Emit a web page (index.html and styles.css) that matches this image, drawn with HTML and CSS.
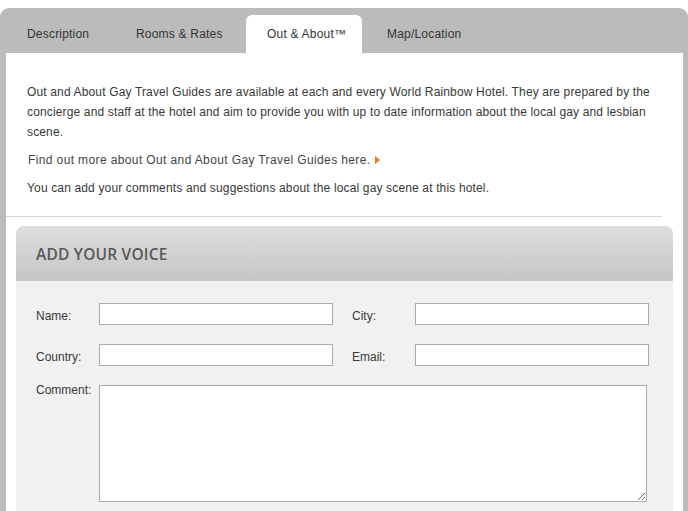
FILE: index.html
```html
<!DOCTYPE html>
<html>
<head>
<meta charset="utf-8">
<link rel="stylesheet" href="styles.css">
</head>
<body>
<div class="panel">
  <nav class="tabs">
    <a class="tab tab-desc">Description</a>
    <a class="tab tab-rooms">Rooms &amp; Rates</a>
    <a class="tab tab-out active">Out &amp; About™</a>
    <a class="tab tab-map">Map/Location</a>
  </nav>
  <div class="content">
    <p class="intro">Out and About Gay Travel Guides are available at each and every World Rainbow Hotel. They are prepared by the concierge and staff at the hotel and aim to provide you with up to date information about the local gay and lesbian scene.</p>
    <p class="more">Find out more about Out and About Gay Travel Guides here. <span class="arrow"></span></p>
    <p class="note">You can add your comments and suggestions about the local gay scene at this hotel.</p>
    <hr class="rule">
    <section class="voice">
      <h2 class="voice-title">ADD YOUR VOICE</h2>
      <form class="voice-form">
        <label class="lbl">Name:</label>
        <input class="field" type="text">
        <label class="lbl">City:</label>
        <input class="field" type="text">
        <label class="lbl">Country:</label>
        <input class="field" type="text">
        <label class="lbl">Email:</label>
        <input class="field" type="text">
        <label class="lbl lbl-top">Comment:</label>
        <textarea class="comment"></textarea>
      </form>
    </section>
  </div>
</div>
</body>
</html>
```

FILE: styles.css
```css
html, body {
  margin: 0;
  padding: 0;
  background: #fff;
}
body {
  padding-top: 8px;
  font-family: "Liberation Sans", Arial, sans-serif;
  font-size: 12px;
  color: #383838;
}
.panel {
  background: #bbbbbb;
  border-radius: 9px 9px 0 0;
  padding: 0 5px 0 6px;
  height: 503px;
}
.tabs {
  display: flex;
  align-items: flex-end;
  height: 45px;
  gap: 4px;
}
.tab {
  display: flex;
  align-items: center;
  height: 38px;
  padding-left: 21px;
  box-sizing: border-box;
  color: #333;
  font-size: 12px;
  letter-spacing: 0.2px;
  border-radius: 6px 6px 0 0;
}
.tab-desc { width: 105px; }
.tab-rooms { width: 127px; }
.tab-out { width: 116px; }
.tab-map { width: 110px; }
.tab.active {
  background: #fff;
}
.content {
  background: #fff;
  height: 458px;
  overflow: hidden;
  padding-top: 29px;
  box-sizing: border-box;
}
.content p {
  margin: 0 21px 8px 21px;
  line-height: 20px;
  letter-spacing: 0.15px;
}
.content .more {
  padding-left: 1px;
  color: #444;
  letter-spacing: 0.38px;
}
.arrow {
  display: inline-block;
  width: 0;
  height: 0;
  border-left: 5px solid #e57b1e;
  border-top: 4px solid transparent;
  border-bottom: 4px solid transparent;
  margin-left: 1px;
}
.rule {
  border: 0;
  border-top: 1px solid #d4d4d4;
  margin: 18px 21px 0 0;
  height: 0;
}
.voice {
  margin: 9px 10px 0 10px;
  background: #f1f1f1;
  border-radius: 8px 8px 0 0;
}
.voice-title {
  margin: 0;
  height: 55px;
  display: flex;
  align-items: center;
  padding-left: 20px;
  border-radius: 8px 8px 0 0;
  background: linear-gradient(#dedede, #c6c6c6);
  font-family: "Open Sans", "Liberation Sans", sans-serif;
  font-weight: 600;
  font-size: 15.5px;
  color: #585858;
  letter-spacing: 0.2px;
}
.voice-form {
  display: grid;
  grid-template-columns: 63px 253px 63px 234px;
  row-gap: 19px;
  padding: 22px 0 20px 20px;
}
.lbl {
  font-size: 12px;
  color: #383838;
  align-self: center;
  margin-top: 4px;
}
.lbl-top {
  align-self: start;
  margin-top: -2px;
}
.field {
  width: 234px;
  height: 22px;
  box-sizing: border-box;
  border: 1px solid #aaa;
  background: #fff;
  margin: 0;
  padding: 2px 4px;
}
.comment {
  grid-column: 2 / 5;
  width: 548px;
  height: 117px;
  box-sizing: border-box;
  border: 1px solid #aaa;
  margin: 0;
  background: #fff;
}
```
